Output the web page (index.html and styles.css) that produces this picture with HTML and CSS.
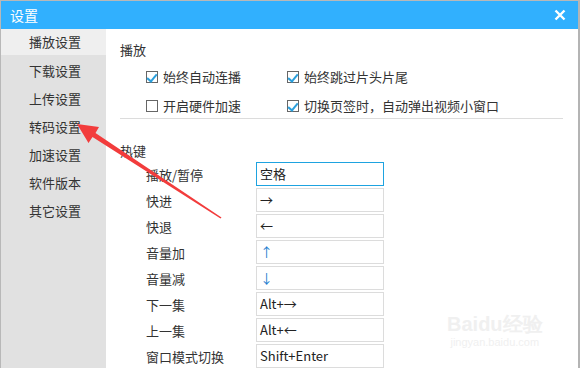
FILE: index.html
```html
<!DOCTYPE html>
<html>
<head>
  <title>设置</title>
  <link rel="stylesheet" href="styles.css">
</head>
<body>

  <div class="window">
    <div class="titlebar">
      <span class="title">设置</span>
      <svg class="close" width="12" height="12" viewBox="0 0 12 12">
        <path d="M1.5 1.5 L10.5 10.5 M10.5 1.5 L1.5 10.5" stroke="#fff" stroke-width="2.4" fill="none"/>
      </svg>
    </div>

    <div class="main">
      <ul class="sidebar">
        <li class="active">播放设置</li>
        <li>下载设置</li>
        <li>上传设置</li>
        <li>转码设置</li>
        <li>加速设置</li>
        <li>软件版本</li>
        <li>其它设置</li>
      </ul>

      <div class="content">
        <div class="section-title">播放</div>
        <div class="options">
          <label class="opt"><span class="box checked"></span>始终自动连播</label>
          <label class="opt"><span class="box checked"></span>始终跳过片头片尾</label>
          <label class="opt"><span class="box"></span>开启硬件加速</label>
          <label class="opt"><span class="box checked"></span>切换页签时，自动弹出视频小窗口</label>
        </div>
        <div class="divider"></div>

        <div class="section-title hot">热键</div>
        <div class="keys">
          <div class="key-row"><span class="key-name">播放/暂停</span><span class="key-input focus">空格</span></div>
          <div class="key-row"><span class="key-name">快进</span><span class="key-input">→</span></div>
          <div class="key-row"><span class="key-name">快退</span><span class="key-input">←</span></div>
          <div class="key-row"><span class="key-name">音量加</span><span class="key-input blue">↑</span></div>
          <div class="key-row"><span class="key-name">音量减</span><span class="key-input blue">↓</span></div>
          <div class="key-row"><span class="key-name">下一集</span><span class="key-input">Alt+→</span></div>
          <div class="key-row"><span class="key-name">上一集</span><span class="key-input">Alt+←</span></div>
          <div class="key-row"><span class="key-name">窗口模式切换</span><span class="key-input">Shift+Enter</span></div>
        </div>
      </div>
    </div>

    <!-- watermark -->
    <div class="watermark">
      <div class="wm-logo">Bai<span class="paw">du</span>经验</div>
      <div class="wm-url">jingyan.baidu.com</div>
    </div>

    <!-- red arrow annotation -->
    <svg class="arrow" width="580" height="368" viewBox="0 0 580 368">
      <polygon points="77,124 99,127 95.5,133 221.5,217.4 220.5,218.6 92.5,137 88.5,143" fill="#f23c3c"/>
    </svg>
  </div>

</body>
</html>
```

FILE: styles.css
```css
* {
  box-sizing: border-box;
}

body {
  margin: 0;
  font-family: "Noto Sans CJK SC", "Noto Sans", sans-serif;
  font-size: 13px;
  color: #333;
  background: #fff;
}

.window {
  position: relative;
  width: 580px;
  height: 368px;
  overflow: hidden;
  border-top: 1px solid #b8b8b8;
  border-left: 1px solid #b8b8b8;
  border-right: 2px solid #b4b4b4;
  display: flex;
  flex-direction: column;
}

.titlebar {
  height: 28px;
  background: #31b0fe;
  display: flex;
  align-items: center;
  justify-content: space-between;
  padding: 0 12px 0 9px;
  flex-shrink: 0;
}

.title {
  color: #fff;
  font-size: 14px;
}

.main {
  flex: 1;
  display: flex;
}

.sidebar {
  list-style: none;
  margin: 0;
  padding: 0;
  width: 105px;
  background: #e1e1e1;
}

.sidebar li {
  height: 28px;
  line-height: 27px;
  padding-left: 28px;
  color: #333;
}

.sidebar li.active {
  background: #efefef;
  height: 26px;
  line-height: 26px;
  margin-bottom: 2px;
}

.content {
  flex: 1;
  padding: 12px 14px 0 14px;
}

.section-title {
  height: 18px;
  line-height: 18px;
}

.options {
  display: grid;
  grid-template-columns: 141px 1fr;
  row-gap: 10px;
  padding: 8px 0 0 26px;
}

.opt {
  display: flex;
  align-items: center;
  height: 19px;
  white-space: nowrap;
}

.box {
  position: relative;
  width: 12px;
  height: 12px;
  border: 1px solid #666;
  background: #fff;
  margin-right: 5px;
  flex-shrink: 0;
}

.box.checked::after {
  content: "";
  position: absolute;
  left: 2px;
  top: 0px;
  width: 4px;
  height: 8px;
  border-right: 2px solid #2a9fdc;
  border-bottom: 2px solid #2a9fdc;
  transform: rotate(40deg);
}

.divider {
  height: 1px;
  background: #dcdcdc;
  margin: 3px 1px 0 0;
}

.section-title.hot {
  margin-top: 23px;
}

.keys {
  padding: 2px 0 0 26px;
  display: flex;
  flex-direction: column;
  gap: 2px;
}

.key-row {
  display: flex;
  align-items: center;
  height: 24px;
}

.key-name {
  width: 110px;
}

.key-input {
  width: 128px;
  height: 24px;
  line-height: 22px;
  border: 1px solid #dcdcdc;
  padding-left: 3px;
  color: #222;
  font-family: "Noto Sans CJK SC", "Liberation Sans", sans-serif;
}

.key-input.focus {
  border: 1px solid #1ea3e0;
}

.key-input.blue {
  color: #1f7fcf;
}

.watermark {
  position: absolute;
  left: 446px;
  top: 312px;
  color: #f0f0f0;
  font-family: "Liberation Sans", sans-serif;
  text-align: center;
}

.wm-logo {
  font-size: 20px;
  font-weight: bold;
  line-height: 22px;
}

.wm-url {
  font-size: 11px;
  line-height: 14px;
}

.arrow {
  position: absolute;
  left: -1px;
  top: -1px;
  pointer-events: none;
}
```
